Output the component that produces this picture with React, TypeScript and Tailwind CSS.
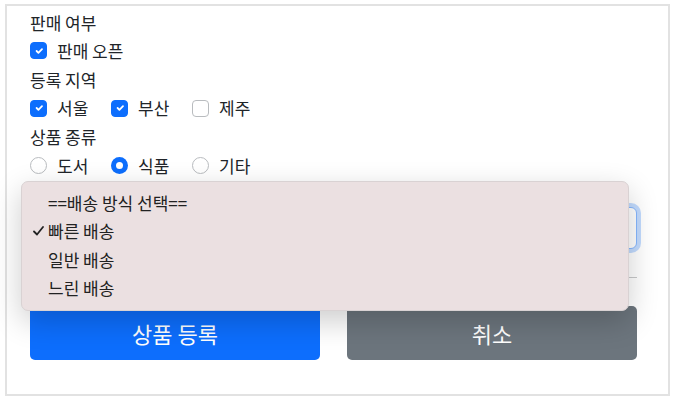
import React from 'react';

const font = "font-['Apple_SD_Gothic_Neo','Noto_Sans_CJK_KR',sans-serif]";

function Check({ checked }: { checked: boolean }) {
  return checked ? (
    <span className="w-[17px] h-[17px] rounded-[4px] bg-[#0d6efd] border border-[#0d6efd] flex items-center justify-center shrink-0">
      <svg width="12" height="12" viewBox="0 0 20 20">
        <path d="m6 10 3 3 6-6" fill="none" stroke="#fff" strokeWidth="3" strokeLinecap="round" strokeLinejoin="round" />
      </svg>
    </span>
  ) : (
    <span className="w-[17px] h-[17px] rounded-[4px] bg-white border border-[#b9bcbf] shrink-0" />
  );
}

function Radio({ checked }: { checked: boolean }) {
  return checked ? (
    <span className="w-[17px] h-[17px] rounded-full bg-[#0d6efd] flex items-center justify-center shrink-0">
      <span className="w-[7px] h-[7px] rounded-full bg-white" />
    </span>
  ) : (
    <span className="w-[17px] h-[17px] rounded-full bg-white border border-[#b9bcbf] shrink-0" />
  );
}

function Item({ children, box }: { children: React.ReactNode; box: React.ReactNode }) {
  return (
    <label className="min-w-[81px] flex items-center gap-[10px] whitespace-nowrap">
      {box}
      <span>{children}</span>
    </label>
  );
}

export default function App() {
  return (
    <div className={`min-h-screen bg-white pt-[4px] pl-[5px] text-[17px] text-[#212529] ${font}`}>
      <div className="relative w-[665px] h-[392px] border-2 border-[#e2e2e2] pl-[23px] pt-[2px]">
        <div className="w-[607px] flex flex-col">
          <div className="h-[28.6px] flex items-center">판매 여부</div>
          <div className="h-[28.6px] flex items-center">
            <Item box={<Check checked />}>판매 오픈</Item>
          </div>
          <div className="h-[28.6px] flex items-center">등록 지역</div>
          <div className="h-[28.6px] flex items-center">
            <Item box={<Check checked />}>서울</Item>
            <Item box={<Check checked />}>부산</Item>
            <Item box={<Check checked={false} />}>제주</Item>
          </div>
          <div className="h-[28.6px] flex items-center">상품 종류</div>
          <div className="h-[28.6px] flex items-center">
            <Item box={<Radio checked={false} />}>도서</Item>
            <Item box={<Radio checked />}>식품</Item>
            <Item box={<Radio checked={false} />}>기타</Item>
          </div>
          <div className="mt-[27.7px] h-[42px] rounded-[6px] border border-[#86b7fe] shadow-[0_0_0_4px_rgba(13,110,253,0.25)] bg-white" />
          <hr className="mt-[28px] border-0 h-px bg-[#c8c9ca]" />
          <div className="mt-[28px] grid grid-cols-2 gap-[27px]">
            <button className="h-[54px] rounded-[5px] bg-[#0d6efd] text-white text-[22px]">상품 등록</button>
            <button className="h-[54px] rounded-[5px] bg-[#6c757d] text-white text-[22px]">취소</button>
          </div>
        </div>

        <div className="absolute left-[14px] top-[175px] w-[608px] h-[130px] rounded-[7px] bg-[#ebe0e1] border border-[#d9d2d3] shadow-[0_10px_30px_rgba(0,0,0,0.2)] pt-[6px] text-[#222]">
          <div className="h-[28.5px] flex items-center pl-[26px]">==배송 방식 선택==</div>
          <div className="h-[28.5px] flex items-center pl-[11px]">
            <svg width="11" height="10" viewBox="0 0 11 10" className="mr-[4px]">
              <path d="M1 5.5 4 8.5 10 1" fill="none" stroke="#222" strokeWidth="1.8" strokeLinecap="round" strokeLinejoin="round" />
            </svg>
            빠른 배송
          </div>
          <div className="h-[28.5px] flex items-center pl-[26px]">일반 배송</div>
          <div className="h-[28.5px] flex items-center pl-[26px]">느린 배송</div>
        </div>
      </div>
    </div>
  );
}
